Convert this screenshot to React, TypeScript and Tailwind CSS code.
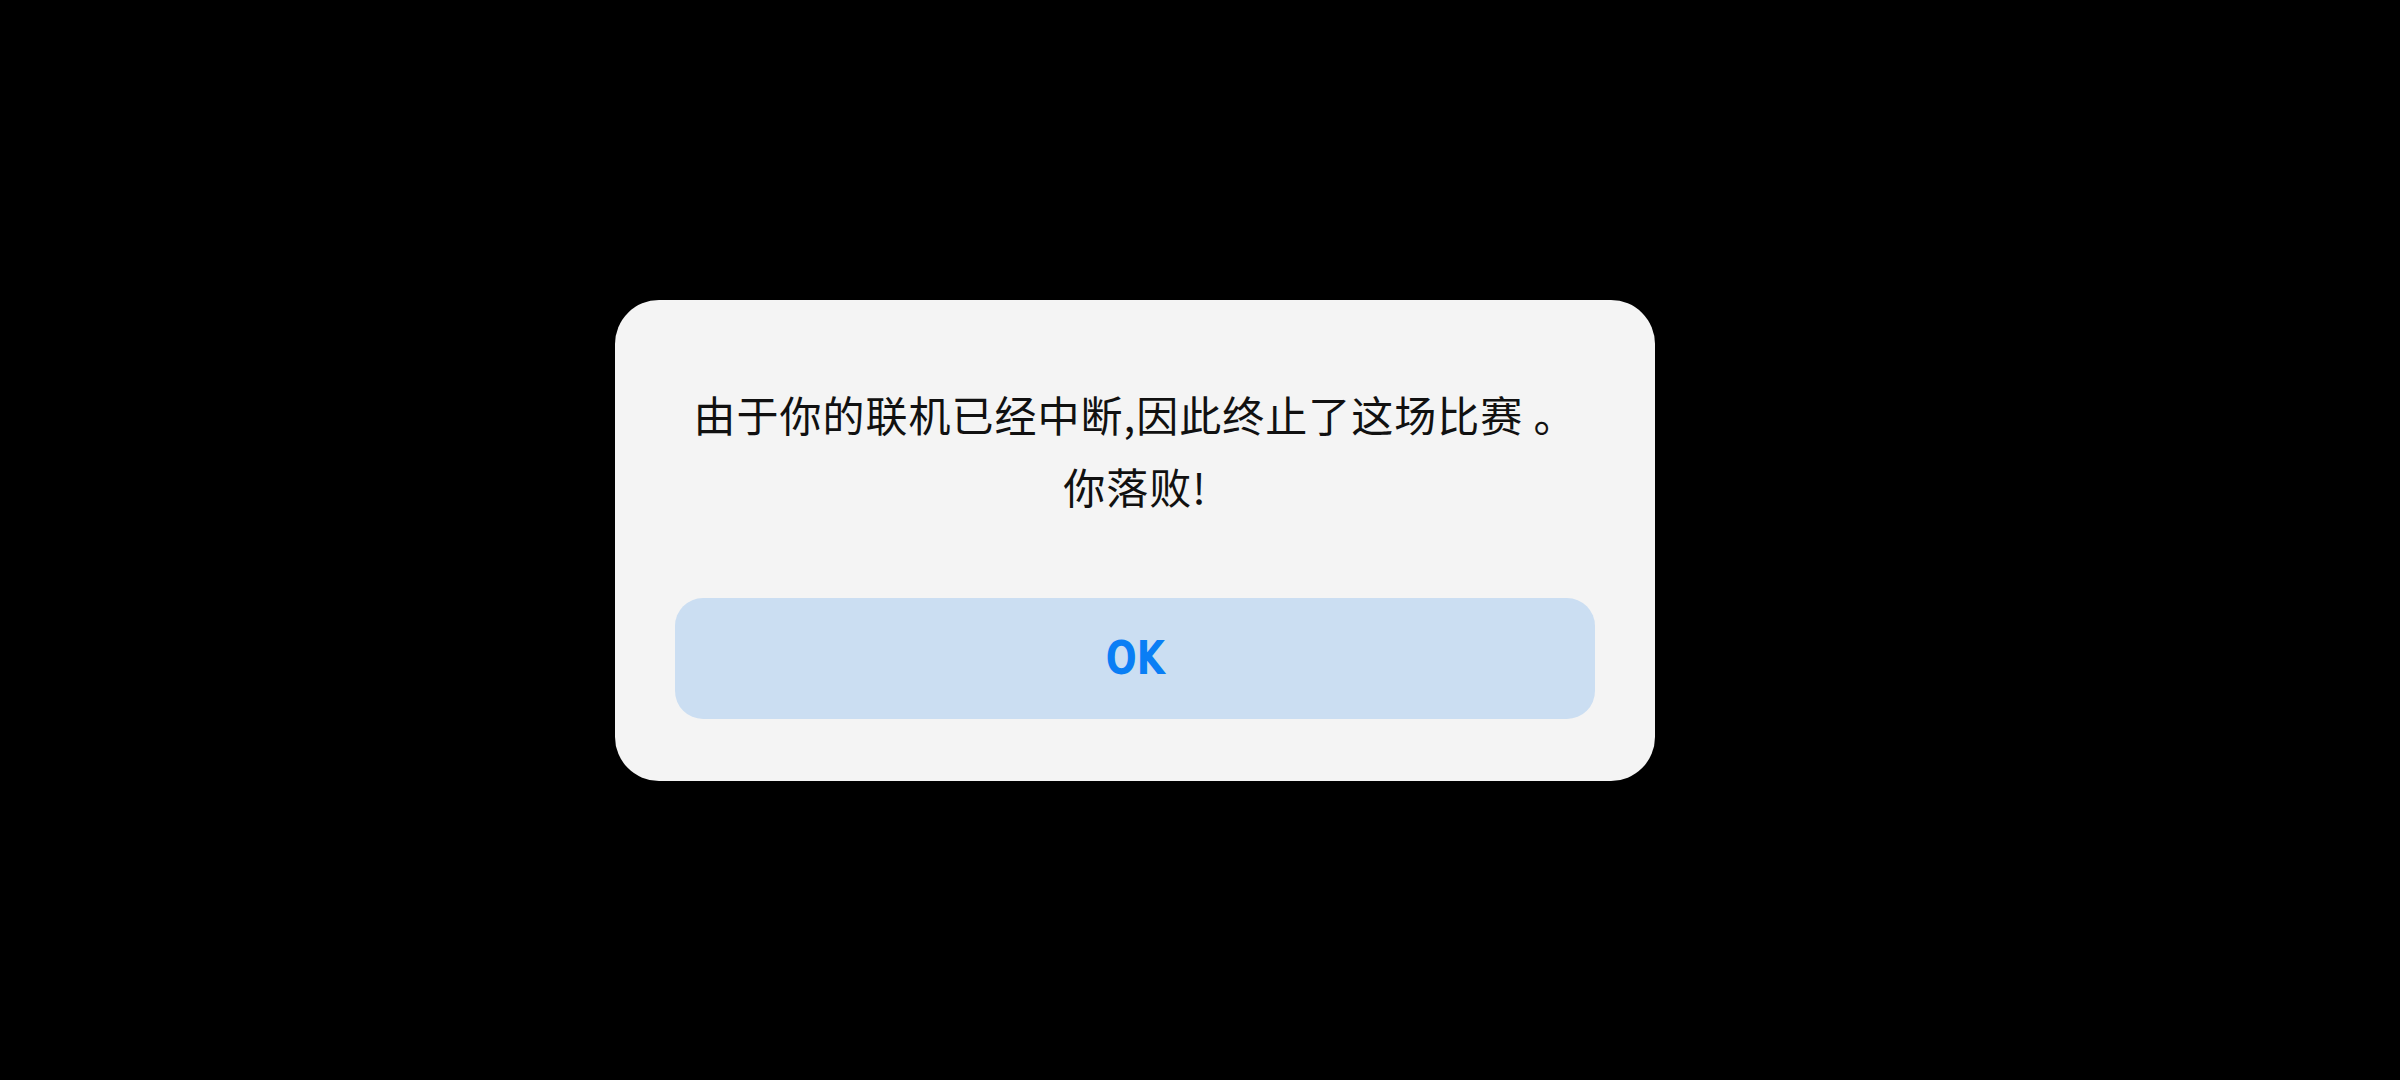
import React from "react";

export default function App() {
  return (
    <div className="w-[2400px] h-[1080px] bg-black flex items-start justify-start pl-[615px]">
      <div className="mt-[300px] w-[1040px] h-[481px] bg-[#f4f4f4] rounded-[44px] flex flex-col items-center px-[60px] pt-[78px]">
        <div
          className="text-[42px] leading-[72px] font-normal tracking-[1px] text-[#111] text-center"
          style={{ fontFamily: '"Noto Sans CJK SC", "Noto Sans", sans-serif' }}
        >
          <div>由于你的联机已经中断,因此终止了这场比赛 。</div>
          <div>你落败!</div>
        </div>
        <button
          className="mt-[76px] w-[920px] h-[121px] rounded-[28px] bg-[#cbdef2] flex items-center justify-center text-[#0a7ef5] text-[47px] font-bold"
          style={{ fontFamily: '"DejaVu Sans Condensed", Roboto, sans-serif' }}
        >
          <span className="inline-block scale-x-[0.86]">OK</span>
        </button>
      </div>
    </div>
  );
}
